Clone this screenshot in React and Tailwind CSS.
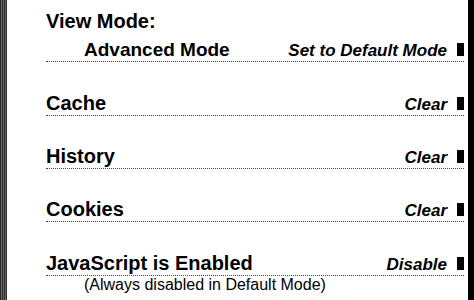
export default function App() {
  const rows = [
    { label: "Cache", action: "Clear", mt: "mt-[30px]" },
    { label: "History", action: "Clear", mt: "mt-[29px]" },
    { label: "Cookies", action: "Clear", mt: "mt-[29px]" },
  ];

  return (
    <div className="w-[474px] h-[300px] overflow-hidden bg-white flex text-black font-['Liberation_Sans',Arial,sans-serif]">
      {/* left scroll edge */}
      <div className="w-[7px] h-full shrink-0 bg-[repeating-linear-gradient(90deg,#2a2a2a_0px,#2a2a2a_1px,#6a6a6a_1px,#6a6a6a_2px)]" />

      <div className="flex-1 pl-[39px] pr-[4px] pt-[10px]">
        <div className="text-[20px] font-bold leading-[23px]">View Mode:</div>
        <Row
          className="mt-[5px]"
          label={<span className="pl-[38px] text-[19px]">Advanced Mode</span>}
          action="Set to Default Mode"
        />

        {rows.map((r) => (
          <Row key={r.label} className={r.mt} label={r.label} action={r.action} />
        ))}

        <Row className="mt-[30px]" label="JavaScript is Enabled" action="Disable" />
        <div className="pl-[38px] text-[16px] leading-[17px]">(Always disabled in Default Mode)</div>
      </div>

      {/* right edge */}
      <div className="w-[6px] h-full shrink-0 bg-black" />
    </div>
  );
}

function Row({ label, action, className = "" }) {
  return (
    <div className={`flex items-baseline justify-between h-[24px] border-b border-dotted border-[#444] ${className}`}>
      <span className="text-[20px] font-bold leading-[23px]">{label}</span>
      <span className="flex items-baseline">
        <span className="text-[17px] font-bold italic leading-[19px]">{action}</span>
        <span className="ml-[10px] w-[7px] h-[13px] bg-black" />
      </span>
    </div>
  );
}
